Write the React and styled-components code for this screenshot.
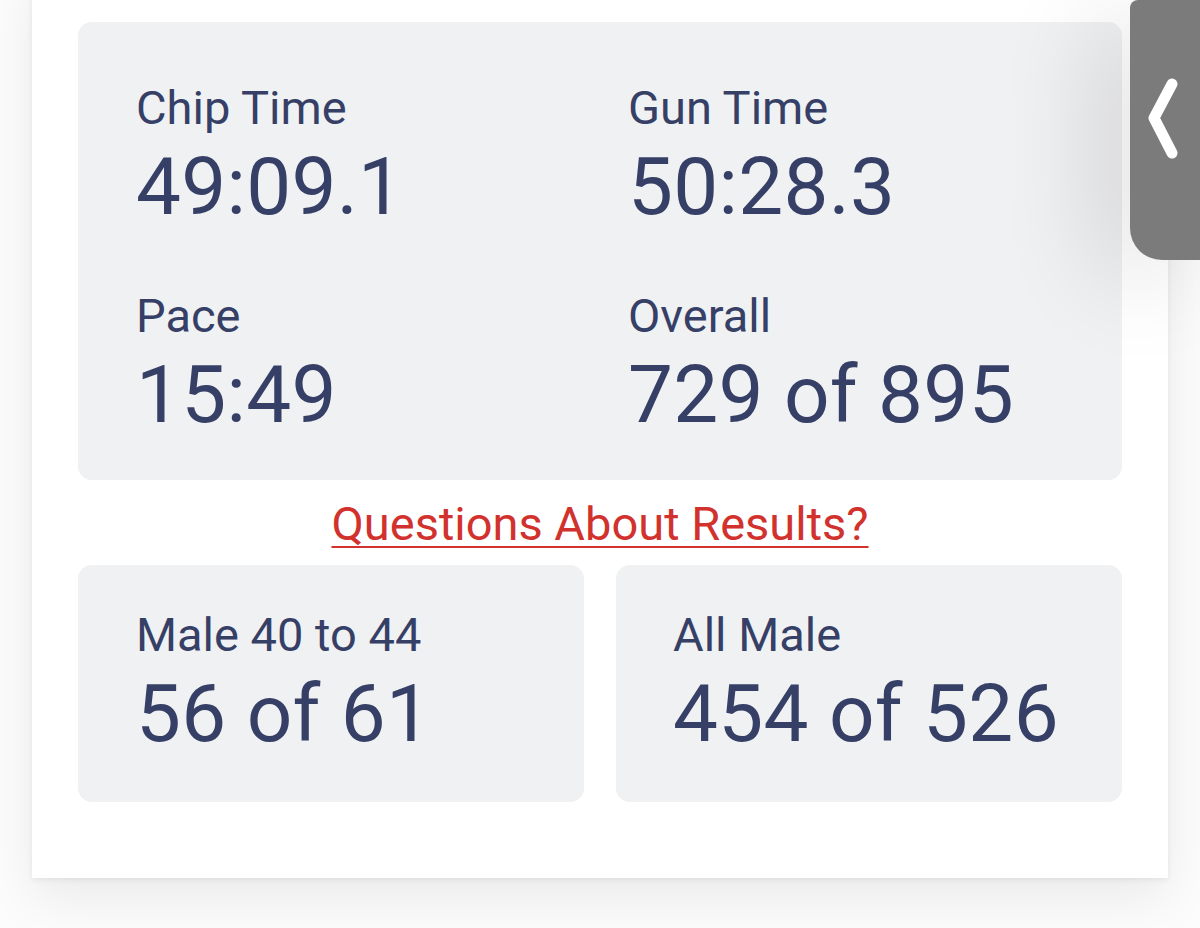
import React from 'react';
import styled, { createGlobalStyle } from 'styled-components';

const GlobalStyle = createGlobalStyle`
  html, body {
    margin: 0;
    padding: 0;
    background: #fcfcfc;
    font-family: Roboto, "Liberation Sans", sans-serif;
    overflow: hidden;
  }
`;

const Page = styled.div`
  position: relative;
  display: flex;
  flex-direction: column;
  width: 1200px;
  height: 928px;
  padding: 0 32px;
  box-sizing: border-box;
`;

const Card = styled.div`
  margin-top: -40px;
  background: #ffffff;
  padding: 62px 46px 76px;
  display: flex;
  flex-direction: column;
  box-shadow: 0 22px 50px rgba(0, 0, 0, 0.07), 0 2px 6px rgba(0, 0, 0, 0.07);
`;

const Panel = styled.div`
  background: #f0f1f3;
  border-radius: 14px;
  box-sizing: border-box;
  padding: ${(p) => p.$pad || '0 58px'};
  height: ${(p) => p.$h}px;
`;

const StatGrid = styled.div`
  display: grid;
  grid-template-columns: 492px 1fr;
  row-gap: 58px;
  padding-top: 60px;
`;

const Stat = styled.div`
  display: flex;
  flex-direction: column;
`;

const Label = styled.div`
  font-size: 47px;
  line-height: 52px;
  color: #363f66;
`;

const Value = styled.div`
  margin-top: 8px;
  font-size: 80px;
  line-height: 90px;
  color: #363f66;
  letter-spacing: 0.3px;
`;

const LinkRow = styled.div`
  height: 85px;
  display: flex;
  align-items: center;
  justify-content: center;
`;

const QuestionLink = styled.a`
  font-size: 47px;
  color: #d2322d;
  text-decoration: underline;
  text-decoration-thickness: 2px;
  text-underline-offset: 6px;
  margin-top: 2px;
`;

const BottomRow = styled.div`
  display: grid;
  grid-template-columns: 1fr 1fr;
  column-gap: 32px;
`;

const Tab = styled.div`
  position: absolute;
  top: 0;
  right: 0;
  width: 70px;
  height: 260px;
  background: #7b7b7b;
  border-bottom-left-radius: 32px;
  border-top-left-radius: 8px;
  display: flex;
  align-items: flex-start;
  padding-top: 78px;
  padding-left: 18px;
  box-sizing: border-box;
  box-shadow: -30px 20px 100px rgba(0, 0, 0, 0.14);
`;

const stats = [
  { label: 'Chip Time', value: '49:09.1' },
  { label: 'Gun Time', value: '50:28.3' },
  { label: 'Pace', value: '15:49' },
  { label: 'Overall', value: '729 of 895' },
];

export default function App() {
  return (
    <Page>
      <GlobalStyle />
      <Card>
        <Panel $h={458} $pad="0 58px">
          <StatGrid>
            {stats.map((s) => (
              <Stat key={s.label}>
                <Label>{s.label}</Label>
                <Value>{s.value}</Value>
              </Stat>
            ))}
          </StatGrid>
        </Panel>
        <LinkRow>
          <QuestionLink>Questions About Results?</QuestionLink>
        </LinkRow>
        <BottomRow>
          <Panel $h={237} $pad="44px 58px 0">
            <Stat>
              <Label>Male 40 to 44</Label>
              <Value>56 of 61</Value>
            </Stat>
          </Panel>
          <Panel $h={237} $pad="44px 57px 0">
            <Stat>
              <Label>All Male</Label>
              <Value>454 of 526</Value>
            </Stat>
          </Panel>
        </BottomRow>
      </Card>
      <Tab>
        <svg width="40" height="90" viewBox="0 0 40 90">
          <polyline
            points="24,6 6,40 24,75"
            fill="none"
            stroke="#ffffff"
            strokeWidth="11"
            strokeLinecap="round"
            strokeLinejoin="round"
          />
        </svg>
      </Tab>
    </Page>
  );
}
